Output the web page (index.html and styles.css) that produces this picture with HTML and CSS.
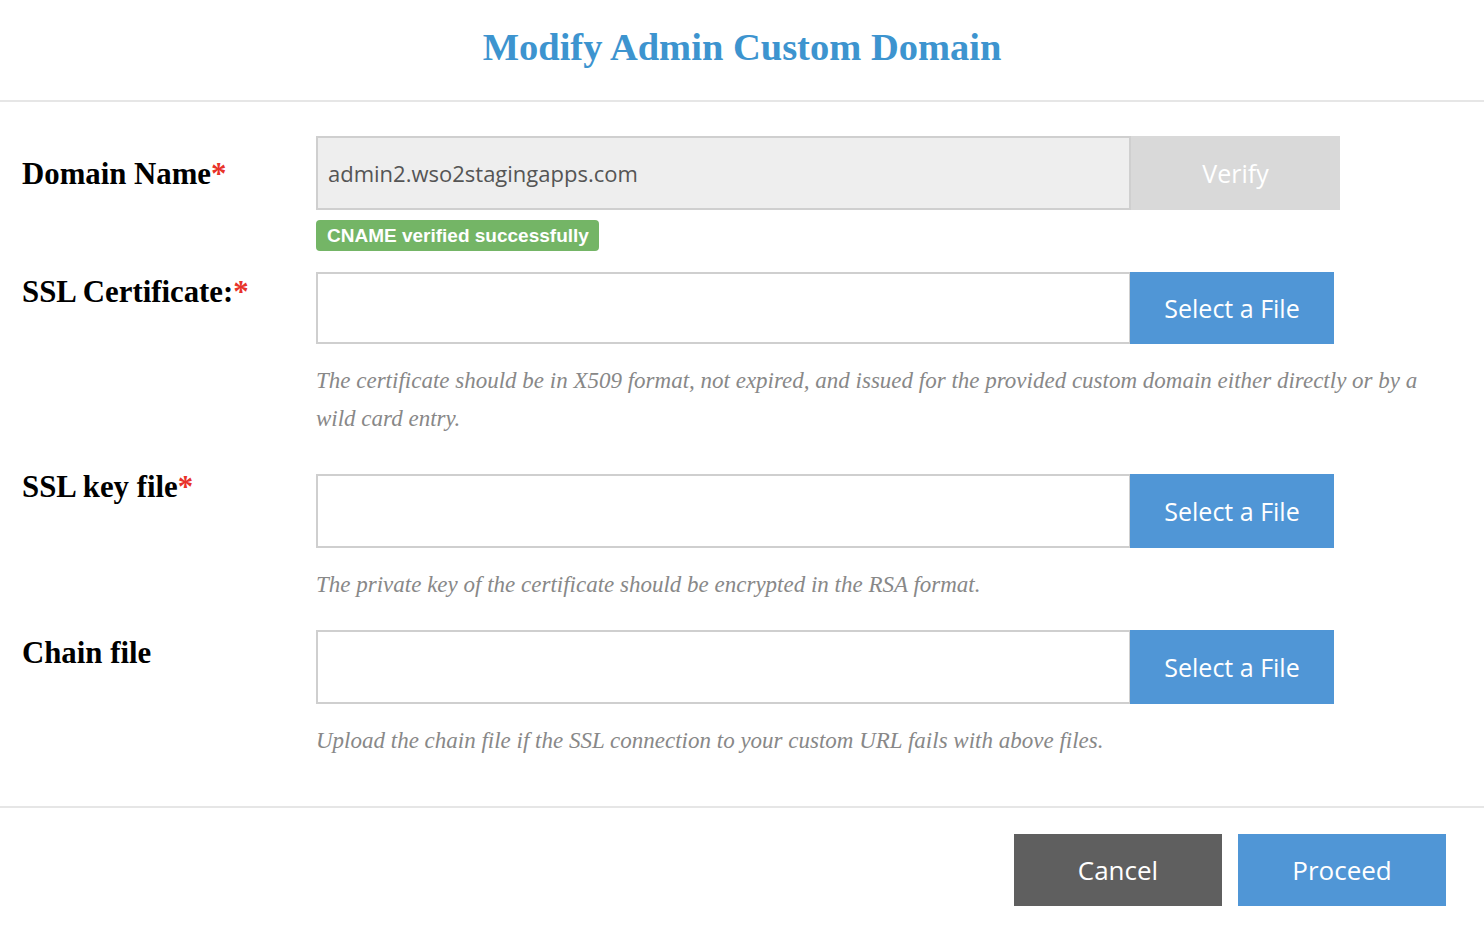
FILE: index.html
```html
<!DOCTYPE html>
<html>
<head>
<meta charset="utf-8">
<link rel="stylesheet" href="styles.css">
</head>
<body>
<div class="modal">
  <div class="header">
    <h1 class="title">Modify Admin Custom Domain</h1>
  </div>
  <div class="body">
    <div class="row row-domain">
      <div class="label label-domain">Domain Name<span class="req">*</span></div>
      <div class="field">
        <div class="control">
          <div class="input input-disabled">admin2.wso2stagingapps.com</div>
          <div class="btn btn-verify">Verify</div>
        </div>
        <div class="badge">CNAME verified successfully</div>
      </div>
    </div>
    <div class="row row-cert">
      <div class="label label-cert">SSL Certificate:<span class="req">*</span></div>
      <div class="field">
        <div class="control control-72">
          <div class="input"></div>
          <div class="btn btn-blue">Select a File</div>
        </div>
        <p class="help">The certificate should be in X509 format, not expired, and issued for the provided custom domain either directly or by a wild card entry.</p>
      </div>
    </div>
    <div class="row row-key">
      <div class="label label-key">SSL key file<span class="req">*</span></div>
      <div class="field">
        <div class="control">
          <div class="input"></div>
          <div class="btn btn-blue">Select a File</div>
        </div>
        <p class="help">The private key of the certificate should be encrypted in the RSA format.</p>
      </div>
    </div>
    <div class="row row-chain">
      <div class="label label-chain">Chain file</div>
      <div class="field">
        <div class="control">
          <div class="input"></div>
          <div class="btn btn-blue">Select a File</div>
        </div>
        <p class="help">Upload the chain file if the SSL connection to your custom URL fails with above files.</p>
      </div>
    </div>
  </div>
  <div class="footer">
    <div class="fbtn fbtn-cancel">Cancel</div>
    <div class="fbtn fbtn-proceed">Proceed</div>
  </div>
</div>
</body>
</html>
```

FILE: styles.css
```css
* { box-sizing: border-box; }
html, body { margin: 0; padding: 0; background: #fff; }
body { font-family: "Liberation Serif", "Times New Roman", serif; }

.modal { width: 1484px; height: 928px; display: flex; flex-direction: column; }

.header {
  height: 102px;
  border-bottom: 2px solid #e6e6e6;
  display: flex;
  justify-content: center;
}
.title {
  margin: 0;
  padding-top: 25px;
  font-family: "Liberation Serif", "Times New Roman", serif;
  font-weight: bold;
  font-size: 38.5px;
  line-height: 44px;
  color: #3d94cf;
}

.body { padding: 34px 0 0 22px; height: 706px; border-bottom: 2px solid #e6e6e6; }

.row { display: flex; }
.label {
  width: 294px;
  flex: none;
  font-weight: bold;
  font-size: 30.8px;
  line-height: 36px;
  color: #000;
}
.req { color: #e8322a; }
.label-domain { padding-top: 20px; }
.label-cert { padding-top: 2px; }
.label-key { margin-top: -5px; }
.label-chain { padding-top: 5px; }

.field { width: 1112px; }
.control { display: flex; height: 74px; }
.control-72 { height: 72px; }
.input {
  width: 815px;
  height: 100%;
  border: 2px solid #cfcfcf;
  background: #fff;
  font-family: "Open Sans", sans-serif;
  font-size: 22px;
  color: #555;
  padding-left: 10px;
  display: flex;
  align-items: center;
}
.input-disabled { background: #eeeeee; }
.btn {
  height: 100%;
  display: flex;
  align-items: center;
  justify-content: center;
  font-family: "Open Sans", sans-serif;
  font-size: 25px;
  color: #fff;
}
.btn-verify { width: 209px; background: #d9d9d9; }
.btn-blue { width: 204px; margin-left: -1px; background: #5096d6; }

.badge {
  display: inline-block;
  margin-top: 10px;
  height: 31px;
  line-height: 31px;
  padding: 0 10px 0 11px;
  border-radius: 4px;
  background: #74b566;
  color: #fff;
  font-family: "Liberation Sans", Arial, sans-serif;
  font-weight: bold;
  font-size: 19px;
}
.row-cert { margin-top: 21px; }
.row-key { margin-top: 36px; }
.row-chain { margin-top: 26px; }

.help {
  margin: 18px 0 0 0;
  font-family: "Liberation Serif", "Times New Roman", serif;
  font-style: italic;
  font-size: 23px;
  line-height: 38px;
  color: #888;
}

.footer {
  display: flex;
  justify-content: flex-end;
  gap: 16px;
  padding: 26px 38px 0 0;
}
.fbtn {
  width: 208px;
  height: 72px;
  display: flex;
  align-items: center;
  justify-content: center;
  font-family: "Open Sans", sans-serif;
  font-size: 26px;
  color: #fff;
}
.fbtn-cancel { background: #5f5f5f; }
.fbtn-proceed { background: #5096d6; }
```
